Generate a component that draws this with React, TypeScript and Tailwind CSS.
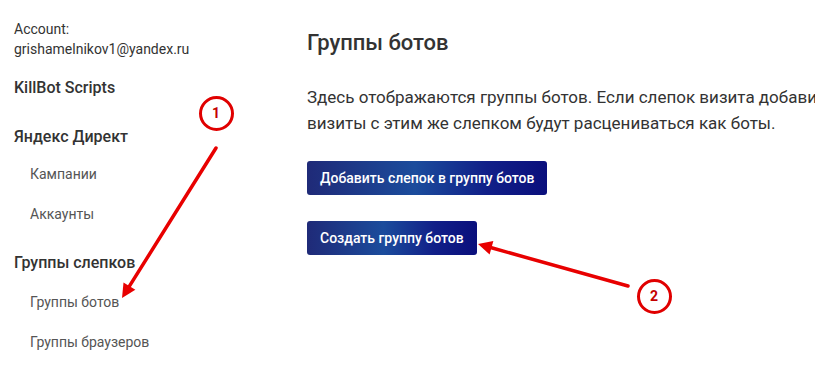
import React from 'react';

const Arrow: React.FC<{ x1: number; y1: number; x2: number; y2: number }> = ({ x1, y1, x2, y2 }) => {
  const a = Math.atan2(y2 - y1, x2 - x1);
  const len = 14;
  const w = 7;
  const bx = x2 - len * Math.cos(a);
  const by = y2 - len * Math.sin(a);
  const p1 = `${bx + w * Math.sin(a)},${by - w * Math.cos(a)}`;
  const p2 = `${bx - w * Math.sin(a)},${by + w * Math.cos(a)}`;
  return (
    <g>
      <line x1={x1} y1={y1} x2={bx} y2={by} stroke="#e80000" strokeWidth={3.5} strokeLinecap="round" />
      <polygon points={`${x2},${y2} ${p1} ${p2}`} fill="#e80000" />
    </g>
  );
};

const Badge: React.FC<{ cx: number; cy: number; n: string }> = ({ cx, cy, n }) => (
  <div
    className="absolute w-[35px] h-[35px] rounded-full border-[3px] border-[#e00000] bg-white flex items-center justify-center text-[14px] font-bold text-[#c40000]"
    style={{ left: cx - 17.5, top: cy - 17.5 }}
  >
    {n}
  </div>
);

const btn =
  'h-[34px] px-[13px] rounded-[3px] text-[14px] font-medium text-white bg-[linear-gradient(90deg,#1f2a78_0%,#1b4c9c_45%,#111f88_75%,#0a0f7c_100%)]';

export default function App() {
  return (
    <div className="relative w-[815px] h-[382px] overflow-hidden bg-white font-['Roboto',sans-serif]">
      <div className="flex">
        {/* Sidebar */}
        <aside className="w-[307px] shrink-0 pl-[14px]">
          <div className="pt-[19px] text-[14px] leading-[20px] text-[#333]">
            <div>Account:</div>
            <div>grishamelnikov1@yandex.ru</div>
          </div>
          <div className="mt-[17px] text-[16px] leading-[24px] font-medium text-[#333]">KillBot Scripts</div>
          <div className="mt-[25px] text-[16px] leading-[24px] font-medium text-[#333]">Яндекс Директ</div>
          <div className="mt-[15px] pl-[16px] text-[14px] leading-[20px] text-[#555]">Кампании</div>
          <div className="mt-[20px] pl-[16px] text-[14px] leading-[20px] text-[#555]">Аккаунты</div>
          <div className="mt-[27px] text-[16px] leading-[24px] font-medium text-[#333]">Группы слепков</div>
          <div className="mt-[17px] pl-[16px] text-[14px] leading-[20px] text-[#555]">Группы ботов</div>
          <div className="mt-[20px] pl-[16px] text-[14px] leading-[20px] text-[#555]">Группы браузеров</div>
        </aside>

        {/* Main */}
        <main className="flex-1 min-w-0">
          <h1 className="pt-[29px] text-[22px] leading-[28px] font-medium text-[#333]">Группы ботов</h1>
          <p className="mt-[27px] text-[17px] leading-[26px] text-[#333] whitespace-nowrap">
            Здесь отображаются группы ботов. Если слепок визита добавить в группу ботов, то все
            <br />
            визиты с этим же слепком будут расцениваться как боты.
          </p>
          <div className="mt-[25px] flex flex-col items-start gap-[26px]">
            <button className={btn}>Добавить слепок в группу ботов</button>
            <button className={btn}>Создать группу ботов</button>
          </div>
        </main>
      </div>

      {/* Annotations */}
      <svg className="absolute inset-0 pointer-events-none" width={815} height={382}>
        <Arrow x1={216} y1={148} x2={122} y2={298} />
        <Arrow x1={628} y1={286} x2={478} y2={244} />
      </svg>
      <Badge cx={216} cy={113} n="1" />
      <Badge cx={654} cy={296} n="2" />
    </div>
  );
}
